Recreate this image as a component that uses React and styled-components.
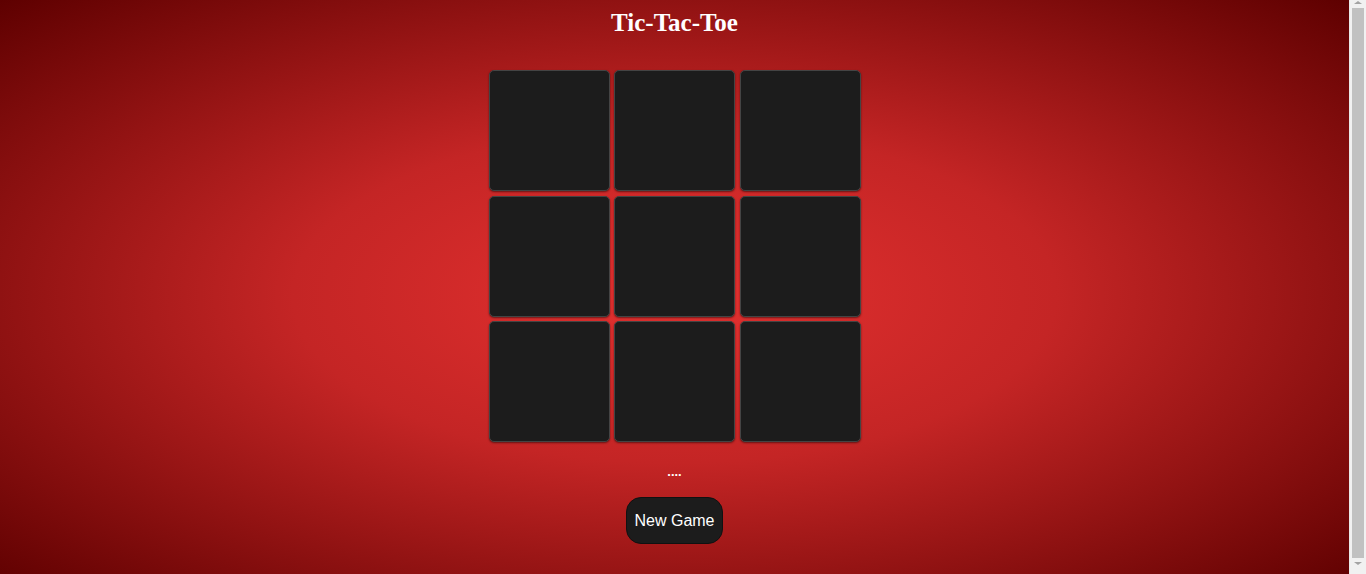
import React, { useState } from "react";
import styled, { createGlobalStyle } from "styled-components";

const GlobalStyle = createGlobalStyle`
  html, body {
    margin: 0;
    padding: 0;
  }
  body {
    font-family: "Liberation Sans", Arial, sans-serif;
  }
`;

const Shell = styled.div`
  display: flex;
  align-items: flex-start;
`;

const Page = styled.main`
  flex: 1;
  min-height: 100vh;
  padding: 9px 0 8px;
  display: flex;
  flex-direction: column;
  align-items: center;
  background: radial-gradient(ellipse at center, #e53130 0%, #c42525 40%, #5e0000 100%);
`;

const Rail = styled.div`
  position: sticky;
  top: 0;
  box-sizing: border-box;
  width: 17px;
  height: 100vh;
  padding: 8px 2px 9px;
  display: flex;
  flex-direction: column;
  align-items: center;
  background: #f1f1f1;
  border-left: 1px solid #e8e8e8;
`;

const Arrow = styled.span`
  width: 0;
  height: 0;
  border-left: 4px solid transparent;
  border-right: 4px solid transparent;
  ${({ $down }) =>
    $down
      ? "border-top: 3px solid #a3a3a3; margin-top: 4px;"
      : "border-bottom: 3px solid #a3a3a3; margin-top: -7px; margin-bottom: 4px;"}
`;

const Thumb = styled.div`
  flex: 1;
  align-self: stretch;
  background: #c1c1c1;
`;

const Title = styled.h1`
  margin: 0;
  font-family: "Liberation Serif", "Times New Roman", serif;
  font-size: 25px;
  line-height: 28px;
  font-weight: bold;
  color: #ffffff;
`;

const Board = styled.div`
  margin-top: 33px;
  display: grid;
  grid-template-columns: repeat(3, 121px);
  grid-auto-rows: 121px;
  gap: 4.5px;
`;

const Cell = styled.button`
  box-sizing: border-box;
  width: 121px;
  height: 121px;
  padding: 0;
  background: #1c1c1c;
  border: 1px solid #444444;
  border-radius: 5px;
  box-shadow: 0 1px 2px rgba(0, 0, 0, 0.5);
  color: #ffffff;
  font-family: "Liberation Sans", Arial, sans-serif;
  font-size: 64px;
  font-weight: bold;
  cursor: pointer;
`;

const Status = styled.div`
  margin-top: 22px;
  font-size: 13px;
  line-height: 15px;
  font-weight: bold;
  color: #ffffff;
`;

const NewGame = styled.button`
  margin-top: 18px;
  box-sizing: border-box;
  height: 47px;
  padding: 0 7px;
  background: #1c1c1c;
  border: 1px solid #111111;
  border-radius: 15px;
  color: #ffffff;
  font-family: "Liberation Sans", Arial, sans-serif;
  font-size: 16px;
  cursor: pointer;
`;

export default function App() {
  const [cells, setCells] = useState(Array(9).fill(""));
  const [xTurn, setXTurn] = useState(true);

  const play = (i) => {
    if (cells[i]) return;
    const next = cells.slice();
    next[i] = xTurn ? "X" : "O";
    setCells(next);
    setXTurn(!xTurn);
  };

  const reset = () => {
    setCells(Array(9).fill(""));
    setXTurn(true);
  };

  return (
    <>
      <GlobalStyle />
      <Shell>
        <Page>
          <Title>Tic-Tac-Toe</Title>
          <Board>
            {cells.map((c, i) => (
              <Cell key={i} onClick={() => play(i)}>
                {c}
              </Cell>
            ))}
          </Board>
          <Status>....</Status>
          <NewGame onClick={reset}>New Game</NewGame>
        </Page>
        <Rail>
          <Arrow />
          <Thumb />
          <Arrow $down />
        </Rail>
      </Shell>
    </>
  );
}
